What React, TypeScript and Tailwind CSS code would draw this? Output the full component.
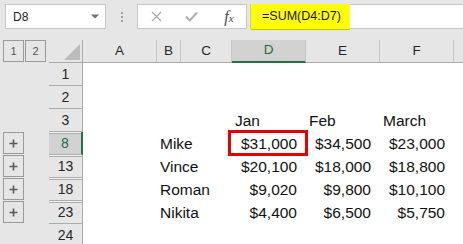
import React from "react";

type Row = {
  n: string;
  hidden?: boolean;
  plus?: boolean;
  sel?: boolean;
  name?: string;
  d?: string;
  e?: string;
  f?: string;
  left?: boolean;
};

const rows: Row[] = [
  { n: "1" },
  { n: "2" },
  { n: "3", d: "Jan", e: "Feb", f: "March", left: true },
  { n: "8", hidden: true, plus: true, sel: true, name: "Mike", d: "$31,000", e: "$34,500", f: "$23,000" },
  { n: "13", hidden: true, plus: true, name: "Vince", d: "$20,100", e: "$18,000", f: "$18,800" },
  { n: "18", hidden: true, plus: true, name: "Roman", d: "$9,020", e: "$9,800", f: "$10,100" },
  { n: "23", hidden: true, plus: true, name: "Nikita", d: "$4,400", e: "$6,500", f: "$5,750" },
  { n: "24" },
];

function Toolbar() {
  return (
    <div className="h-[40px] bg-[#e6e6e6] flex items-start pt-[4px]">
      <div className="ml-[5px] w-[101px] h-[25px] shrink-0 bg-white border border-[#c6c6c6] flex items-center justify-between pl-[7px] pr-[6px]">
        <span className="text-[12px] text-[#222] leading-none">D8</span>
        <svg width="8" height="5" viewBox="0 0 8 5">
          <path d="M0 0.5h8L4 4.5z" fill="#707070" />
        </svg>
      </div>
      <div className="w-[31px] h-[25px] shrink-0 flex flex-col items-center justify-center gap-[2px]">
        <div className="w-[2px] h-[2px] bg-[#a0a0a0]" />
        <div className="w-[2px] h-[2px] bg-[#a0a0a0]" />
        <div className="w-[2px] h-[2px] bg-[#a0a0a0]" />
      </div>
      <div className="w-[110px] h-[25px] shrink-0 bg-white border border-[#c6c6c6] flex items-center">
        <div className="w-[36px] flex justify-center">
          <svg width="11" height="11" viewBox="0 0 11 11">
            <path d="M1 1L10 10M10 1L1 10" stroke="#a8a8a8" strokeWidth="1.2" fill="none" />
          </svg>
        </div>
        <div className="w-[34px] flex justify-center">
          <svg width="13" height="11" viewBox="0 0 13 11">
            <path d="M1 5.5L4.8 9.5L12 1.5" stroke="#b0b0b0" strokeWidth="2" fill="none" />
          </svg>
        </div>
        <div className="flex-1 flex justify-center items-baseline font-['Liberation_Serif',serif] italic text-[#4a4a4a] pl-[4px]">
          <span className="text-[16px] leading-none">f</span>
          <span className="text-[11px] leading-none">x</span>
        </div>
      </div>
      <div className="ml-[3px] flex-1 h-[25px] bg-white border border-[#c6c6c6] border-r-0 flex items-start">
        <div className="-mt-[1px] w-[99px] h-[26px] bg-[#ffff00] border-b border-[#c9c400] flex items-center pl-[11px] text-[12.5px] text-[#111]">
          =SUM(D4:D7)
        </div>
      </div>
    </div>
  );
}

const cols = [
  { k: "A", w: "w-[74px]" },
  { k: "B", w: "w-[24px]" },
  { k: "C", w: "w-[51px]" },
  { k: "D", w: "w-[74px]" },
  { k: "E", w: "w-[74px]" },
  { k: "F", w: "w-[74px]" },
];

function HeaderRow() {
  return (
    <div className="flex h-[23px] bg-[#e6e6e6]">
      <div className="w-[49px] shrink-0 flex items-start gap-[1px] pl-[3px]">
        <div className="w-[21px] h-[22px] border border-[#9a9a9a] flex items-center justify-center text-[11px] text-[#555]">1</div>
        <div className="w-[21px] h-[22px] border border-[#9a9a9a] flex items-center justify-center text-[11px] text-[#555]">2</div>
      </div>
      <div className="w-[34px] shrink-0 border-r border-b border-[#ababab] relative">
        <svg className="absolute right-[2px] bottom-[2px]" width="16" height="16" viewBox="0 0 16 16">
          <path d="M16 0V16H0z" fill="#bcbcbc" />
        </svg>
      </div>
      {cols.map((c) =>
        c.k === "D" ? (
          <div
            key={c.k}
            className={`${c.w} shrink-0 bg-[#d2d2d2] border-r border-r-[#c6c6c6] border-b-2 border-b-[#217346] flex items-center justify-center text-[13.5px] text-[#1d6b41]`}
          >
            {c.k}
          </div>
        ) : (
          <div
            key={c.k}
            className={`${c.w} shrink-0 border-r border-r-[#c6c6c6] border-b border-b-[#ababab] flex items-center justify-center text-[13.5px] text-[#262626]`}
          >
            {c.k}
          </div>
        )
      )}
      <div className="flex-1 border-b border-b-[#ababab]" />
    </div>
  );
}

function PlusBox() {
  return (
    <div className="w-[21px] h-[22px] border border-[#9a9a9a] flex items-center justify-center">
      <svg width="9" height="9" viewBox="0 0 9 9">
        <path d="M4.5 0.5V8.5M0.5 4.5H8.5" stroke="#5a5a5a" strokeWidth="1.6" />
      </svg>
    </div>
  );
}

function DataRow({ r }: { r: Row }) {
  const valCls = r.left
    ? "flex items-center pl-[3px] text-[15.5px] text-[#111] whitespace-nowrap"
    : "flex items-center justify-end pr-[9px] text-[15.5px] text-[#111] whitespace-nowrap";
  return (
    <div className="flex h-[23px]">
      <div className="w-[49px] shrink-0 bg-[#e6e6e6] flex items-start pl-[3px]">{r.plus && <PlusBox />}</div>
      <div
        className={`w-[34px] shrink-0 flex flex-col border-b border-b-[#ababab] ${
          r.sel ? "bg-[#d2d2d2] border-r-2 border-r-[#217346]" : "bg-[#e6e6e6] border-r border-r-[#ababab]"
        }`}
      >
        {r.hidden && (
          <>
            <div className="h-[1px] bg-[#f4f4f4]" />
            <div className="h-[1px] bg-[#ababab]" />
          </>
        )}
        <div
          className={`flex-1 flex items-center justify-center text-[14px] ${
            r.sel ? "text-[#1d6b41]" : "text-[#262626]"
          }`}
        >
          {r.n}
        </div>
      </div>
      <div className="w-[74px] shrink-0" />
      <div className="w-[24px] shrink-0 flex items-center pl-[3px] text-[15.5px] text-[#111] whitespace-nowrap overflow-visible">
        {r.name}
      </div>
      <div className="w-[51px] shrink-0" />
      <div className={`w-[74px] shrink-0 relative ${valCls}`}>
        {r.d}
        {r.sel && (
          <div className="absolute -left-[4px] -right-[2px] -top-[2px] -bottom-[1px] border-[3px] border-[#e60000] z-10" />
        )}
      </div>
      <div className={`w-[74px] shrink-0 ${valCls}`}>{r.e}</div>
      <div className={`w-[74px] shrink-0 ${valCls}`}>{r.f}</div>
      <div className="flex-1" />
    </div>
  );
}

export default function App() {
  return (
    <div className="w-[463px] h-[244px] overflow-hidden bg-white font-['Liberation_Sans',Arial,sans-serif]">
      <Toolbar />
      <HeaderRow />
      {rows.map((r) => (
        <DataRow key={r.n} r={r} />
      ))}
    </div>
  );
}
